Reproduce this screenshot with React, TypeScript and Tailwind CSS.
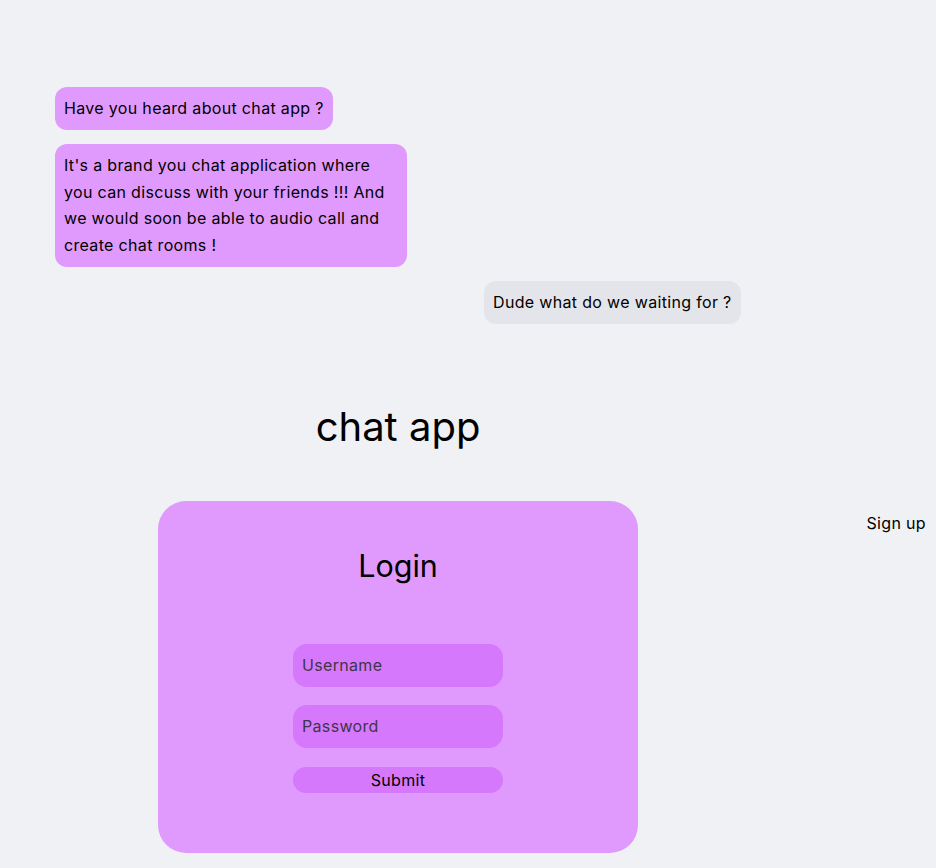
export default function App() {
  return (
    <div className="min-h-screen bg-[#f0f1f5] font-['Inter',sans-serif] text-base tracking-[0.33px] text-black">
      <div className="flex flex-col items-start gap-[14px] pl-[55px] pt-[87px]">
        <p className="rounded-[12px] bg-[#e09afd] px-[9px] py-[8.25px] leading-[26.5px]">
          Have you heard about chat app ?
        </p>
        <p className="w-[352px] rounded-[12px] bg-[#e09afd] px-[9px] py-[8.25px] leading-[26.5px]">
          It's a brand you chat application where you can discuss with your
          friends !!! And we would soon be able to audio call and create chat
          rooms !
        </p>
        <p className="ml-[429px] rounded-[12px] bg-[#e4e5ea] px-[9px] py-[8.25px] leading-[26.5px]">
          Dude what do we waiting for ?
        </p>
      </div>

      <div className="flex">
        <div className="flex w-[796px] flex-col items-center">
          <h1 className="mt-[77px] text-[40px] leading-[52px] tracking-normal">
            chat app
          </h1>
          <form className="mt-[48px] flex h-[352px] w-[480px] flex-col items-center rounded-[28px] bg-[#e09afd] pt-[45px]">
            <h2 className="text-[30.5px] leading-[40px] tracking-normal">Login</h2>
            <input
              type="text"
              placeholder="Username"
              className="mt-[58px] h-[43px] w-[210px] rounded-[14px] bg-[#d678fc] px-[9px] text-base text-black placeholder-[#3f3548] outline-none"
            />
            <input
              type="password"
              placeholder="Password"
              className="mt-[18px] h-[43px] w-[210px] rounded-[14px] bg-[#d678fc] px-[9px] text-base text-black placeholder-[#3f3548] outline-none"
            />
            <button
              type="button"
              className="mt-[19px] h-[26px] w-[210px] rounded-[13px] bg-[#d678fc] text-base leading-[26px]"
            >
              Submit
            </button>
          </form>
        </div>
        <div className="flex flex-1 justify-end pr-[10px] pt-[187px]">
          <a className="cursor-pointer">Sign up</a>
        </div>
      </div>
    </div>
  );
}
